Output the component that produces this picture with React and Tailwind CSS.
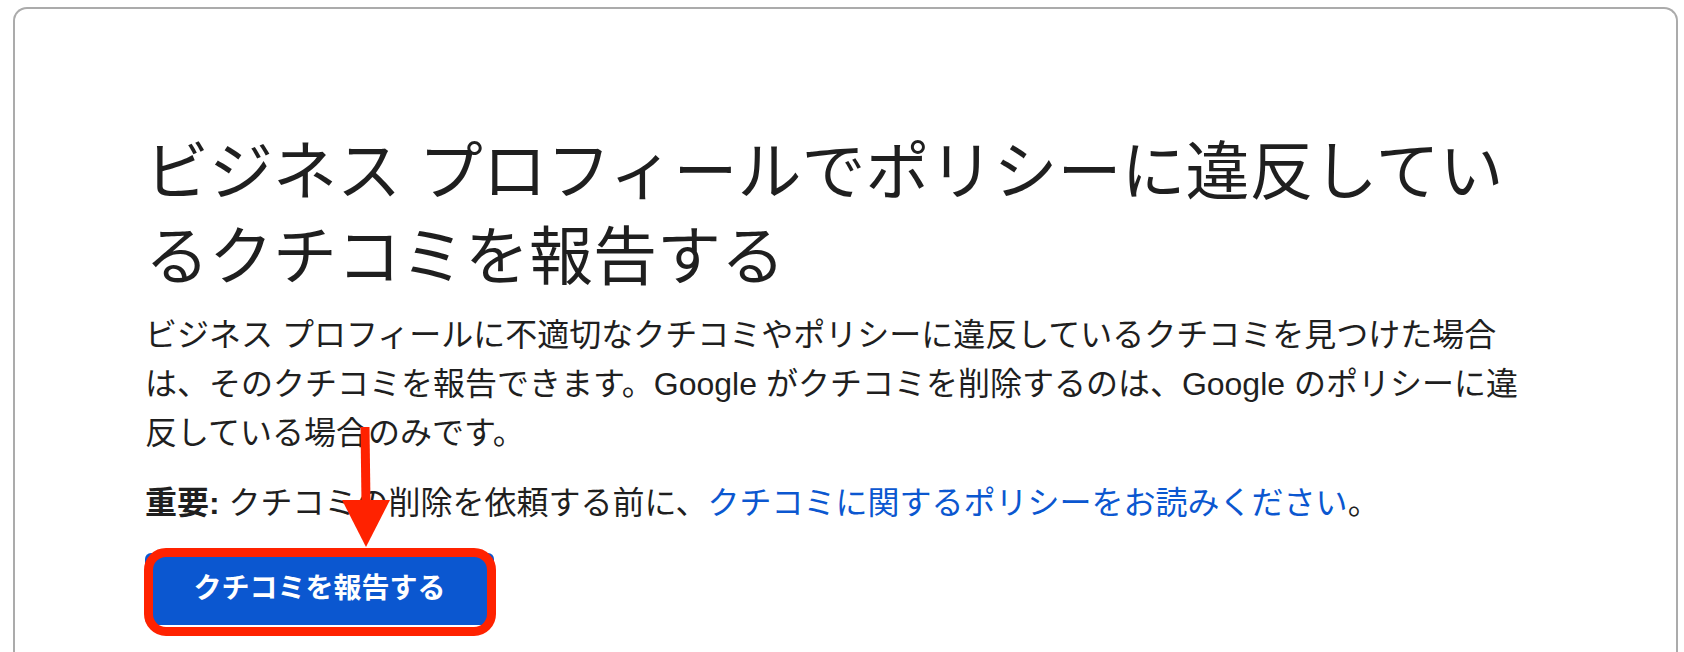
import React from 'react';

const font = { fontFamily: "'Liberation Sans', 'Noto Sans CJK JP', sans-serif" };

function RedArrow() {
  // annotation arrow drawn over the page
  return (
    <svg className="absolute left-0 top-0 pointer-events-none" width="1684" height="652">
      <line x1="365" y1="427" x2="366" y2="504" stroke="#ff2200" strokeWidth="9" />
      <polygon points="342,500 390,500 366,547" fill="#ff2200" />
    </svg>
  );
}

export default function App() {
  return (
    <div className="relative h-[652px] w-[1684px] overflow-hidden bg-white pt-[7px] pl-[13px] pr-[6px]" style={font}>
      <div className="h-[700px] rounded-t-[14px] border-2 border-b-0 border-[#ababab] pl-[130px] pr-[120px] pt-[121px] text-[#1f1f1f]">
        <div className="w-[1400px]">
          <h1 className="text-[64px] leading-[85px] font-normal">
            ビジネス プロフィールでポリシーに違反しているクチコミを報告する
          </h1>
          <p className="mt-[11px] text-[32px] leading-[49px]">
            ビジネス プロフィールに不適切なクチコミやポリシーに違反しているクチコミを見つけた場合は、そのクチコミを報告できます。Google がクチコミを削除するのは、Google のポリシーに違反している場合のみです。
          </p>
          <p className="mt-[21px] text-[32px] leading-[49px]">
            <b className="font-bold">重要:</b> クチコミの削除を依頼する前に、
            <a href="#" className="text-[#0b57d0]">クチコミに関するポリシーをお読みください</a>。
          </p>
          <div className="mt-[25px] relative w-[349px]">
            <button className="flex h-[72px] w-[349px] items-center justify-center rounded-[6px] bg-[#0b57d0] text-[28px] font-bold text-white">
              クチコミを報告する
            </button>
            <div className="absolute -left-[1px] -top-[5px] h-[88px] w-[352px] rounded-[22px] border-[9px] border-[#ff2200]" />
          </div>
        </div>
      </div>
      <RedArrow />
    </div>
  );
}
